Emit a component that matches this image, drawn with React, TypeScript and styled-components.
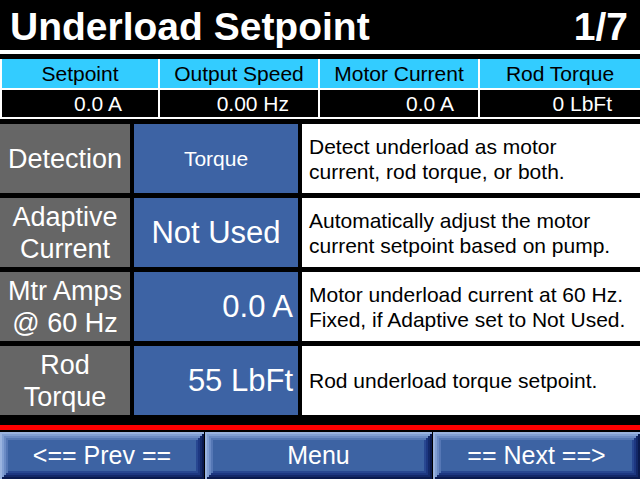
import React from "react";
import styled, { createGlobalStyle } from "styled-components";

const Global = createGlobalStyle`
  html, body { margin: 0; padding: 0; background: #000; }
  body { width: 640px; height: 479px; overflow: hidden; font-family: "Liberation Sans", Arial, sans-serif; }
  * { box-sizing: border-box; }
`;

const Screen = styled.div`
  width: 640px;
  height: 479px;
  background: #000;
  display: flex;
  flex-direction: column;
`;

const TitleBar = styled.div`
  height: 50px;
  display: flex;
  align-items: center;
  justify-content: space-between;
  padding: 2px 12px 0 10px;
  color: #fff;
  font-weight: bold;
  font-size: 39px;
  line-height: 1;
`;

const Rule = styled.div`
  height: 4px;
  background: #fff;
  margin-bottom: 5px;
`;

const StatusGrid = styled.div`
  display: grid;
  grid-template-columns: 156px 158px 158px 1fr;
  grid-template-rows: 29px 27px;
  column-gap: 2px;
  row-gap: 2px;
  padding-left: 2px;
  padding-bottom: 2px;
  background: #fff;
`;

const StatusHead = styled.div`
  background: #33ccff;
  color: #000;
  font-size: 21px;
  display: flex;
  align-items: center;
  justify-content: center;
  white-space: nowrap;
`;

const StatusValue = styled.div<{ $pad: number }>`
  background: #000;
  color: #fff;
  font-size: 21px;
  display: flex;
  align-items: center;
  justify-content: flex-end;
  padding-right: ${(p) => p.$pad}px;
  white-space: nowrap;
`;

const Body = styled.div`
  margin-top: 5px;
  display: grid;
  grid-template-columns: 130px 164px 1fr;
  grid-auto-rows: 69px;
  column-gap: 4px;
  row-gap: 5px;
`;

const Label = styled.div`
  background: #666666;
  color: #fff;
  font-size: 27px;
  line-height: 32px;
  display: flex;
  align-items: center;
  justify-content: center;
  text-align: center;
  white-space: nowrap;
`;

const Value = styled.div<{ $size: number; $align: "center" | "right" }>`
  background: #3d63a4;
  color: #fff;
  font-size: ${(p) => p.$size}px;
  display: flex;
  align-items: center;
  justify-content: ${(p) => (p.$align === "right" ? "flex-end" : "center")};
  padding-right: ${(p) => (p.$align === "right" ? "5px" : "0")};
  white-space: nowrap;
`;

const Desc = styled.div`
  background: #fff;
  color: #000;
  font-size: 21px;
  line-height: 25px;
  display: flex;
  align-items: center;
  padding-left: 7px;
  white-space: nowrap;
`;

const RedLine = styled.div`
  margin-top: 10px;
  height: 5px;
  background: #ff0000;
  margin-bottom: 2px;
`;

const ButtonBar = styled.div`
  flex: 1;
  display: grid;
  grid-template-columns: 204px 227px 1fr;
  column-gap: 1px;
`;

const SoftKey = styled.button`
  border: none;
  margin: 0;
  padding: 0 0 1px 0;
  background: #3d63a3;
  color: #fff;
  font-family: "Liberation Sans", Arial, sans-serif;
  font-size: 25px;
  display: flex;
  align-items: center;
  justify-content: center;
  white-space: nowrap;
  box-shadow:
    inset 2px 2px 0 #9ab3df,
    inset -2px -2px 0 #0a1a4e,
    inset 4px 4px 0 #819fd3,
    inset -4px -4px 0 #132868,
    inset 6px 6px 0 #6b8bc5,
    inset -6px -6px 0 #1d3781,
    inset 8px 8px 0 #5577b5,
    inset -8px -8px 0 #284791;
`;

const status = [
  { head: "Setpoint", value: "0.0 A", pad: 36 },
  { head: "Output Speed", value: "0.00 Hz", pad: 29 },
  { head: "Motor Current", value: "0.0 A", pad: 24 },
  { head: "Rod Torque", value: "0 LbFt", pad: 28 },
];

type Row = {
  label: React.ReactNode;
  value: string;
  size: number;
  align: "center" | "right";
  desc: React.ReactNode;
};

const rows: Row[] = [
  {
    label: "Detection",
    value: "Torque",
    size: 21,
    align: "center",
    desc: (
      <>
        Detect underload as motor
        <br />
        current, rod torque, or both.
      </>
    ),
  },
  {
    label: (
      <>
        Adaptive
        <br />
        Current
      </>
    ),
    value: "Not Used",
    size: 31,
    align: "center",
    desc: (
      <>
        Automatically adjust the motor
        <br />
        current setpoint based on pump.
      </>
    ),
  },
  {
    label: (
      <>
        Mtr Amps
        <br />@ 60 Hz
      </>
    ),
    value: "0.0 A",
    size: 31,
    align: "right",
    desc: (
      <>
        Motor underload current at 60 Hz.
        <br />
        Fixed, if Adaptive set to Not Used.
      </>
    ),
  },
  {
    label: (
      <>
        Rod
        <br />
        Torque
      </>
    ),
    value: "55 LbFt",
    size: 31,
    align: "right",
    desc: <>Rod underload torque setpoint.</>,
  },
];

export default function App() {
  return (
    <>
      <Global />
      <Screen>
        <TitleBar>
          <span>Underload Setpoint</span>
          <span>1/7</span>
        </TitleBar>
        <Rule />
        <StatusGrid>
          {status.map((s) => (
            <StatusHead key={s.head}>{s.head}</StatusHead>
          ))}
          {status.map((s) => (
            <StatusValue key={s.head + "v"} $pad={s.pad}>
              {s.value}
            </StatusValue>
          ))}
        </StatusGrid>
        <Body>
          {rows.map((r, i) => (
            <React.Fragment key={i}>
              <Label>{r.label}</Label>
              <Value $size={r.size} $align={r.align}>
                {r.value}
              </Value>
              <Desc>
                <div>{r.desc}</div>
              </Desc>
            </React.Fragment>
          ))}
        </Body>
        <RedLine />
        <ButtonBar>
          <SoftKey>&lt;== Prev ==</SoftKey>
          <SoftKey>Menu</SoftKey>
          <SoftKey>== Next ==&gt;</SoftKey>
        </ButtonBar>
      </Screen>
    </>
  );
}
